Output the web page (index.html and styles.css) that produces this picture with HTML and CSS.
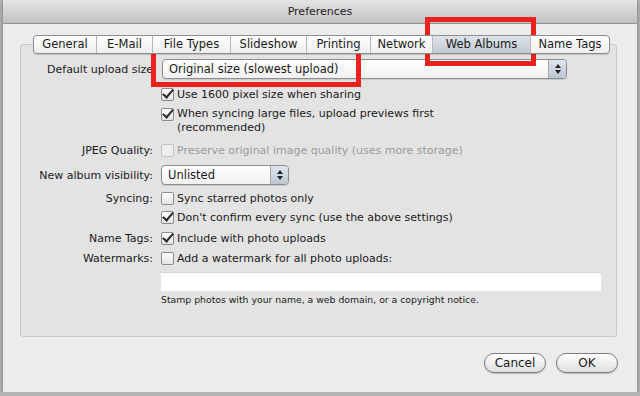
FILE: index.html
```html
<!DOCTYPE html>
<html lang="en">
<head>
    <meta charset="UTF-8">
    <title>Preferences</title>
    <link rel="stylesheet" href="styles.css">
</head>
<body>
    <div class="window">
        <div class="titlebar">Preferences</div>

        <div class="tabs">
            <span class="tab">General</span>
            <span class="tab">E-Mail</span>
            <span class="tab">File Types</span>
            <span class="tab">Slideshow</span>
            <span class="tab">Printing</span>
            <span class="tab">Network</span>
            <span class="tab selected">Web Albums</span>
            <span class="tab">Name Tags</span>
        </div>

        <div class="panel">
            <div class="row row-upload">
                <div class="label">Default upload size</div>
                <div class="popup popup-wide">
                    <span>Original size (slowest upload)</span>
                    <span class="stepper"></span>
                </div>
            </div>

            <div class="row row-check row-first">
                <div class="label"></div>
                <span class="check on"></span>
                <span>Use 1600 pixel size when sharing</span>
            </div>

            <div class="row row-check row-two">
                <div class="label"></div>
                <span class="check on"></span>
                <span>When syncing large files, upload previews first<br>(recommended)</span>
            </div>

            <div class="row row-check row-spaced disabled">
                <div class="label">JPEG Quality:</div>
                <span class="check"></span>
                <span>Preserve original image quality (uses more storage)</span>
            </div>

            <div class="row row-visibility">
                <div class="label">New album visibility:</div>
                <div class="popup popup-small">
                    <span>Unlisted</span>
                    <span class="stepper"></span>
                </div>
            </div>

            <div class="row row-check row-spaced">
                <div class="label">Syncing:</div>
                <span class="check"></span>
                <span>Sync starred photos only</span>
            </div>

            <div class="row row-check">
                <div class="label"></div>
                <span class="check on"></span>
                <span>Don't confirm every sync (use the above settings)</span>
            </div>

            <div class="row row-check row-tags">
                <div class="label">Name Tags:</div>
                <span class="check on"></span>
                <span>Include with photo uploads</span>
            </div>

            <div class="row row-check row-watermark">
                <div class="label">Watermarks:</div>
                <span class="check"></span>
                <span>Add a watermark for all photo uploads:</span>
            </div>

            <div class="row row-field">
                <div class="label"></div>
                <div class="field"></div>
            </div>

            <div class="row row-note">
                <div class="label"></div>
                <span>Stamp photos with your name, a web domain, or a copyright notice.</span>
            </div>
        </div>

        <div class="buttons">
            <span class="button">Cancel</span>
            <span class="button">OK</span>
        </div>

        <!-- annotation boxes drawn over the dialog -->
        <div class="mark mark-tab"></div>
        <div class="mark mark-popup"></div>
    </div>
</body>
</html>
```

FILE: styles.css
```css
html {
    background-color: #b4b4b4;
}
body {
    margin: 0;
    font-family: 'DejaVu Sans', Verdana, sans-serif;
    font-size: 11px;
    color: #1a1a1a;
}
.window {
    position: relative;
    width: 634px;
    height: 392px;
    margin: 0 3px;
    background-color: #ececec;
    box-shadow: 0 1px 4px rgba(0,0,0,0.4);
    overflow: hidden;
}
.titlebar {
    height: 23px;
    line-height: 23px;
    text-align: center;
    font-size: 11px;
    color: #222;
    background: linear-gradient(#e4e4e4, #c2c2c2);
    border-bottom: 1px solid #919191;
}
.tabs {
    display: flex;
    margin: 11px 0 0 30px;
    position: relative;
    z-index: 1;
    width: max-content;
    border: 1px solid #8e8e8e;
    border-radius: 4px;
    background: linear-gradient(#ffffff, #eeeeee);
    box-shadow: 0 1px 1px rgba(0,0,0,0.15);
}
.tab {
    height: 17px;
    line-height: 17px;
    text-align: center;
    font-size: 11.5px;
    box-sizing: border-box;
    border-left: 1px solid #b9b9b9;
}
.tab:nth-child(1) { width: 62px; border-left: none; }
.tab:nth-child(2) { width: 56px; }
.tab:nth-child(3) { width: 78px; }
.tab:nth-child(4) { width: 76px; }
.tab:nth-child(5) { width: 64px; }
.tab:nth-child(6) { width: 62px; }
.tab:nth-child(7) { width: 98px; }
.tab:nth-child(8) { width: 79px; }
.tab.selected {
    background: linear-gradient(#dfe4ea, #c1c8d1);
}
.panel {
    margin: -10px 20px 0 17px;
    height: 293px;
    padding-top: 13px;
    box-sizing: border-box;
    background-color: #e3e3e3;
    border: 1px solid #c9c9c9;
    border-radius: 3px;
}
.row {
    display: flex;
    align-items: center;
    height: 19px;
}
.label {
    width: 132px;
    flex-shrink: 0;
    text-align: right;
    padding-right: 8px;
    white-space: nowrap;
}
.row-upload {
    height: 22px;
}
.row-upload .label {
    padding-right: 9px;
}
.row-first {
    margin-top: 5px;
}
.row-two {
    height: 30px;
    align-items: flex-start;
    line-height: 14px;
    margin-top: 3px;
}
.row-two .check {
    margin-top: 1px;
}
.row-spaced {
    margin-top: 4px;
}
.row-visibility {
    height: 20px;
    margin-top: 5px;
}
.row-tags {
    margin-top: 2px;
}
.row-watermark {
    margin-top: 1px;
}
.disabled {
    color: #9a9a9a;
}
.disabled .label {
    color: #1a1a1a;
}
.check {
    width: 11px;
    height: 11px;
    flex-shrink: 0;
    margin: 0 3px 0 0;
    border: 1px solid #8c8c8c;
    border-radius: 2px;
    background: linear-gradient(#ffffff, #e4e4e4);
    position: relative;
}
.disabled .check {
    border-color: #c2c2c2;
    background: #eeeeee;
}
.check.on::after {
    content: "";
    position: absolute;
    left: 3px;
    top: -2px;
    width: 4px;
    height: 9px;
    border: solid #2a2a2a;
    border-width: 0 2px 2px 0;
    transform: rotate(40deg);
}
.popup {
    display: flex;
    align-items: center;
    justify-content: space-between;
    height: 18px;
    padding-left: 6px;
    border: 1px solid #8d8d8d;
    border-radius: 4px;
    background: linear-gradient(#ffffff, #f0f0f0);
    box-shadow: 0 1px 1px rgba(0,0,0,0.12);
    font-size: 11.5px;
}
.popup-wide {
    width: 397px;
}
.popup-small {
    width: 120px;
}
.stepper {
    width: 17px;
    height: 18px;
    border-left: 1px solid #a8a8a8;
    border-radius: 0 4px 4px 0;
    background: linear-gradient(#dfe5ec, #bcc6d2);
    position: relative;
}
.stepper::before,
.stepper::after {
    content: "";
    position: absolute;
    left: 6px;
    border-left: 3px solid transparent;
    border-right: 3px solid transparent;
}
.stepper::before {
    top: 4px;
    border-bottom: 4px solid #222;
}
.stepper::after {
    top: 10px;
    border-top: 4px solid #222;
}
.row-field {
    height: 19px;
    margin-top: 4px;
}
.field {
    width: 440px;
    height: 19px;
    background-color: #ffffff;
    border-top: 1px solid #d6d6d6;
    box-sizing: border-box;
}
.row-note {
    height: 14px;
    margin-top: 1px;
    font-size: 9.3px;
}
.buttons {
    display: flex;
    justify-content: flex-end;
    gap: 10px;
    margin: 16px 19px 0 0;
}
.button {
    width: 60px;
    height: 18px;
    line-height: 18px;
    text-align: center;
    font-size: 12px;
    border: 1px solid #7c7c7c;
    border-radius: 10px;
    background: linear-gradient(#ffffff, #dedede);
    box-shadow: 0 1px 1px rgba(0,0,0,0.2);
}
.mark {
    position: absolute;
    border: 5px solid #e8231e;
    box-sizing: border-box;
}
.mark-tab {
    left: 422px;
    top: 17px;
    width: 111px;
    height: 49px;
}
.mark-popup {
    left: 148px;
    top: 48px;
    width: 210px;
    height: 39px;
}
```
